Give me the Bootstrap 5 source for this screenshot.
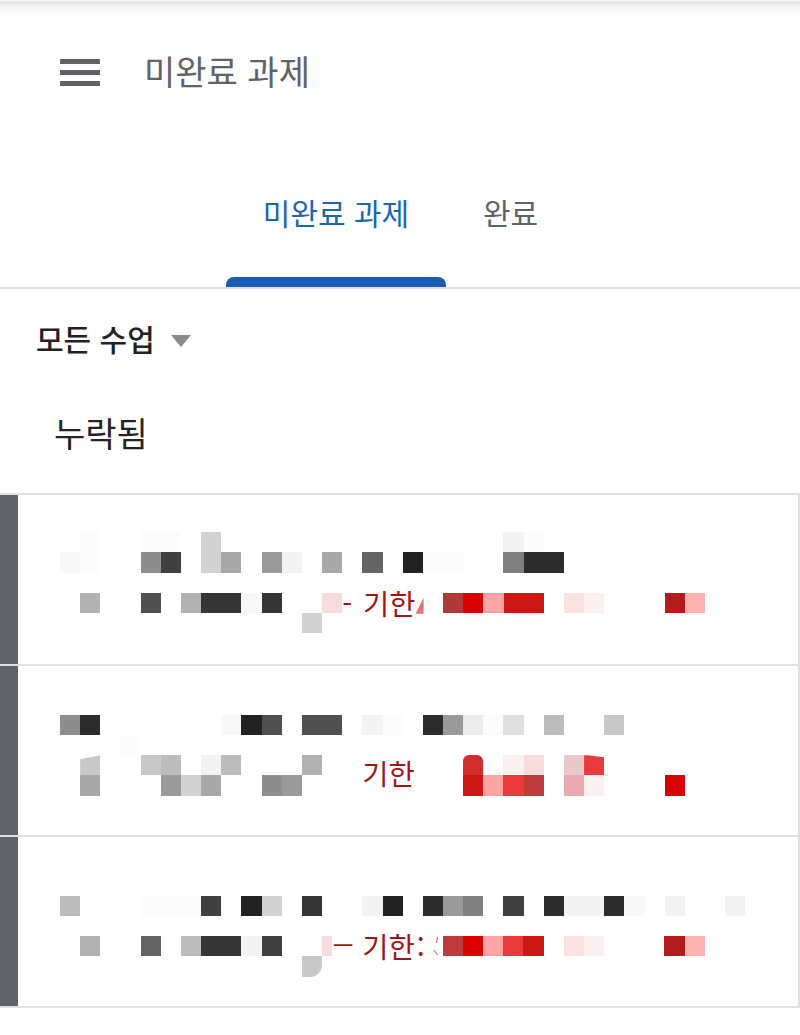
<!DOCTYPE html>
<html lang="ko">
<head>
<meta charset="utf-8">
<title>미완료 과제</title>
<link href="https://cdn.jsdelivr.net/npm/bootstrap@5.3.0/dist/css/bootstrap.min.css" rel="stylesheet">
<style>
:root{--c:20.17px;--line:#e0e0e0;--slate:#5f6368}
html,body{height:1035px;overflow:hidden}
body{font-family:"Noto Sans CJK KR","Noto Sans",sans-serif;background:#fff;color:#222}
.topbar{height:145px;padding-left:60px;gap:44px;background:linear-gradient(#fff 0,#e2e2e2 2px,#f2f2f2 6px,#fff 16px)}
.burger{width:40px;height:28px;gap:6px}
.burger span{height:5.3px;background:var(--slate)}
.page-title{font-size:34px;line-height:40px;color:var(--slate);margin:0 0 4px;font-weight:400}
.tabbar{height:144px;padding-left:226px;border-bottom:2px solid var(--line)}
.tabbar .nav-link{height:142px;padding:0 0 8px;font-size:30px;line-height:40px;color:var(--slate);position:relative;display:flex;align-items:center;justify-content:center}
.tabbar .nav-link.active{width:220px;color:#1a67b0}
.tabbar .nav-link.active::after{content:"";position:absolute;left:0;right:0;bottom:0;height:10px;background:#1a5bb5;border-radius:8px 8px 0 0}
.tab-next{margin-left:37px}
.filter{height:102px;padding-left:36px;padding-bottom:4px;gap:16px;font-size:30px;font-weight:500;color:#222}
.caret-down{width:0;height:0;border-left:10.5px solid transparent;border-right:10.5px solid transparent;border-top:12px solid #8a8a8a;margin-top:6px}
.section-head{height:84px;margin:0 0 18px;padding-left:54px;padding-top:1px;font-size:34px;font-weight:400;color:#222}
.tasks{border-radius:0}
.tasks .list-group-item{height:171px;padding:0;border:solid var(--line);border-width:2px 2px 0 0;border-radius:0;display:flex}
.tasks .list-group-item:last-child{height:173px;border-bottom-width:2px}
.side{flex:0 0 17.5px;background:var(--slate)}
.mosaic{padding-left:42.5px;flex:1}
.pad-a{padding-top:37.3px}.pad-b{padding-top:49px}.pad-c{padding-top:59px}
.mrow{display:flex;height:var(--c)}
.mrow i{flex:0 0 var(--c);display:block}
.mrow i.half{flex-basis:10px}
.due{display:flex;align-items:center;height:var(--c);font-size:28.5px;line-height:var(--c);color:#a31515;white-space:pre;font-style:normal;word-spacing:3px}
.due-w5{flex:0 0 calc(var(--c)*5)}
.due-w4{flex:0 0 calc(var(--c)*4);height:calc(var(--c)*2);margin-top:calc(var(--c)*-1);padding-bottom:4px}
.due-w6{flex:0 0 110.7px}
.dash{font-size:42px;line-height:0;font-weight:300;margin-right:8px;transform:translateY(-7px)}
.colon{margin-left:2px}
.tri{display:block;width:8px;height:16px;background:#e87070;clip-path:polygon(100% 0,100% 100%,0 100%);margin-top:6px}
.ticks{margin-left:auto;margin-right:4px}
.slant{clip-path:polygon(0 20%,100% 0,100% 100%,0 100%)}
.flag{clip-path:polygon(0 0,20% 0,100% 10%,100% 100%,0 100%)}
.rtop{border-radius:6px 6px 0 0}
.rbr{border-bottom-right-radius:12px}
.k0{background:#222}.k1{background:#2c2c2c}.k2{background:#353535}.k3{background:#404040}.k4{background:#505050}.k5{background:#646464}.k6{background:#808080}.k7{background:#8e8e8e}.k8{background:#9a9a9a}.k9{background:#a8a8a8}.ka{background:#b2b2b2}.kb{background:#bcbcbc}.kc{background:#c8c8c8}.kd{background:#d2d2d2}.ke{background:#e0e0e0}.kf{background:#ececec}.kg{background:#f3f3f3}.kh{background:#f8f8f8}.ki{background:#fcfcfc}
.r0{background:#d60404}.r1{background:#cc1717}.r2{background:#b31c1c}.r3{background:#b03a3a}.r4{background:#e83c3c}.r5{background:#ffa3a3}.r6{background:#ffb3b3}.r7{background:#eba8ae}.r8{background:#eac8cc}.r9{background:#fbe1e1}.ra{background:#fdf0f0}.rb{background:#f6dcdc}.rc{background:#d42c2c}.rd{background:#bf3b3b}
</style>
</head>
<body>
<header class="topbar d-flex align-items-center">
  <div class="burger d-flex flex-column" aria-label="메뉴"><span></span><span></span><span></span></div>
  <h1 class="page-title">미완료 과제</h1>
</header>
<nav class="nav tabbar">
  <a class="nav-link active" href="#">미완료 과제</a>
  <a class="nav-link tab-next" href="#">완료</a>
</nav>
<div class="filter d-flex align-items-center"><span>모든 수업</span><span class="caret-down"></span></div>
<h2 class="section-head d-flex align-items-center">누락됨</h2>
<div class="list-group tasks">
  <div class="list-group-item">
    <div class="side"></div>
    <div class="mosaic pad-a">
      <div class="mrow"><i></i><i class="ki"></i><i></i><i></i><i class="ki"></i><i class="ki"></i><i></i><i class="kd"></i><i></i><i></i><i></i><i></i><i></i><i></i><i></i><i></i><i></i><i></i><i></i><i></i><i></i><i></i><i class="kg"></i><i class="ki"></i></div>
      <div class="mrow"><i class="kh"></i><i class="ki"></i><i></i><i></i><i class="k7"></i><i class="k3"></i><i></i><i class="kd"></i><i class="k9"></i><i></i><i class="k8"></i><i class="kg"></i><i></i><i class="k9"></i><i></i><i class="k5"></i><i></i><i class="k0"></i><i class="ki"></i><i class="ki"></i><i></i><i></i><i class="k6"></i><i class="k1"></i><i class="k1"></i></div>
      <div class="mrow"></div>
      <div class="mrow"><i></i><i class="ka"></i><i></i><i></i><i class="k4"></i><i></i><i class="ka"></i><i class="k2"></i><i class="k2"></i><i class="kh"></i><i class="k2"></i><i></i><i></i><i class="rb"></i><span class="due due-w5">- 기한<b class="tri"></b></span><i class="r3"></i><i class="r0"></i><i class="r5"></i><i class="r1"></i><i class="r1"></i><i></i><i class="r9"></i><i class="ra"></i><i></i><i></i><i></i><i class="r2"></i><i class="r6"></i></div>
      <div class="mrow"><i></i><i></i><i></i><i></i><i></i><i></i><i></i><i></i><i></i><i></i><i></i><i></i><i class="kd"></i></div>
    </div>
  </div>
  <div class="list-group-item">
    <div class="side"></div>
    <div class="mosaic pad-b">
      <div class="mrow"><i class="k7"></i><i class="k1"></i><i></i><i></i><i></i><i></i><i></i><i></i><i class="kh"></i><i class="k0"></i><i class="k4"></i><i></i><i class="k4"></i><i class="k4"></i><i></i><i class="kg"></i><i class="ki"></i><i></i><i class="k1"></i><i class="k8"></i><i class="kf"></i><i class="ki"></i><i class="ke"></i><i></i><i class="kb"></i><i></i><i></i><i class="kc"></i></div>
      <div class="mrow"><i></i><i></i><i></i><i class="ki"></i></div>
      <div class="mrow"><i></i><i class="kc slant"></i><i></i><i></i><i class="kc"></i><i class="kb"></i><i></i><i class="kg"></i><i class="kb"></i><i></i><i></i><i></i><i class="ka"></i><i></i><i></i><i></i><i></i><i></i><i></i><i></i><i class="rc rtop"></i><i></i><i class="ra"></i><i class="rb"></i><i></i><i class="r8"></i><i class="r4 flag"></i></div>
      <div class="mrow"><i></i><i class="k9"></i><i></i><i></i><i></i><i class="k8"></i><i class="kd"></i><i class="k9"></i><i></i><i></i><i class="k7"></i><i class="k8"></i><i></i><i></i><i></i><span class="due due-w4">기한</span><i></i><i class="r1"></i><i class="r5"></i><i class="r4"></i><i class="rd"></i><i></i><i class="r7"></i><i class="ra"></i><i></i><i></i><i></i><i class="r0"></i></div>
    </div>
  </div>
  <div class="list-group-item">
    <div class="side"></div>
    <div class="mosaic pad-c">
      <div class="mrow"><i class="kb"></i><i></i><i></i><i></i><i class="ki"></i><i class="ki"></i><i class="ki"></i><i class="k3"></i><i></i><i class="k0"></i><i class="kd"></i><i></i><i class="k2"></i><i></i><i></i><i class="kg"></i><i class="k0"></i><i></i><i class="k1"></i><i class="k8"></i><i class="k6"></i><i></i><i class="k3"></i><i></i><i class="k1"></i><i class="kg"></i><i class="kg"></i><i class="k1"></i><i class="kh"></i><i></i><i class="kg"></i><i></i><i></i><i class="kg"></i></div>
      <div class="mrow"></div>
      <div class="mrow"><i></i><i class="ka"></i><i></i><i></i><i class="k5"></i><i></i><i class="kb"></i><i class="k2"></i><i class="k2"></i><i class="kg"></i><i class="k3"></i><i></i><i></i><i class="rb half"></i><span class="due due-w6"><span class="dash">–</span>기한<span class="colon">:</span><svg class="ticks" width="6" height="20" viewBox="0 0 6 20" aria-hidden="true"><path d="M4.5 1 3.5 7M1 14l3.5 5" stroke="#a85a5a" stroke-width="1" fill="none"/></svg></span><i class="rd"></i><i class="r0"></i><i class="r5"></i><i class="r4"></i><i class="r1"></i><i></i><i class="r9"></i><i class="ra"></i><i></i><i></i><i></i><i class="r2"></i><i class="r6"></i></div>
      <div class="mrow"><i></i><i></i><i></i><i></i><i></i><i></i><i></i><i></i><i></i><i></i><i></i><i></i><i class="kc rbr"></i></div>
    </div>
  </div>
</div>
<script src="https://cdn.jsdelivr.net/npm/bootstrap@5.3.0/dist/js/bootstrap.bundle.min.js"></script>
</body>
</html>
